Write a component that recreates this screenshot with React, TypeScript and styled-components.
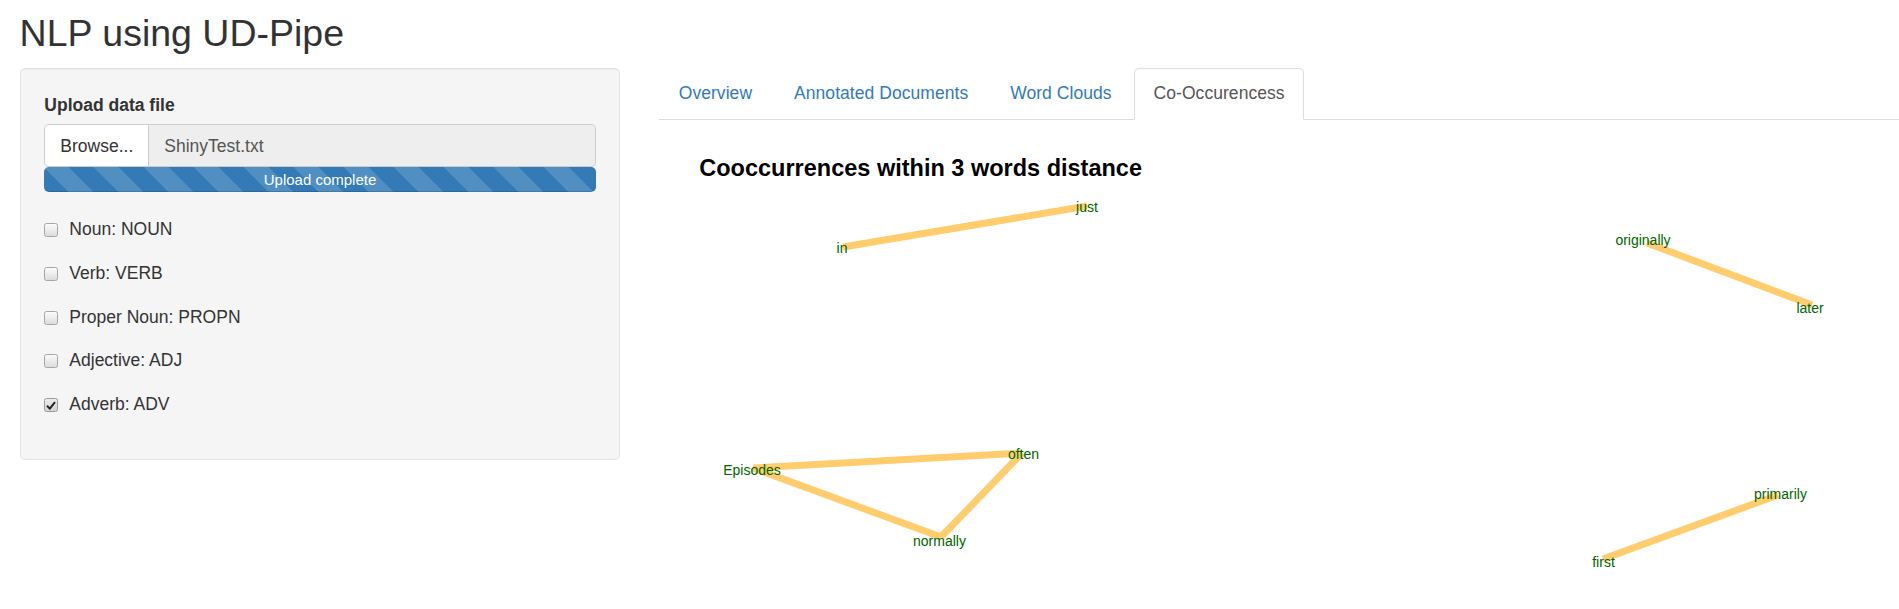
import React from "react";
import styled, { createGlobalStyle, css } from "styled-components";

const GlobalStyle = createGlobalStyle`
  html, body {
    margin: 0;
    padding: 0;
    background: #fff;
    overflow: hidden;
  }
  body {
    font-family: "Liberation Sans", Arial, sans-serif;
    font-size: 17.5px;
    line-height: 25px;
    color: #333;
  }
  * { box-sizing: border-box; }
`;

const Page = styled.div`
  padding-left: 19.6px;
  width: 1899px;
  height: 609px;
`;

const Title = styled.h2`
  margin: 0 0 13.35px 0;
  padding-top: 13.4px;
  font-size: 37.5px;
  font-weight: 500;
  line-height: 41.25px;
  color: #333;
`;

const Row = styled.div`
  display: flex;
  align-items: flex-start;
`;

const Well = styled.div`
  flex: none;
  width: 600.8px;
  background: #f5f5f5;
  border: 1.25px solid #e3e3e3;
  border-radius: 5px;
  box-shadow: inset 0 1px 1px rgba(0, 0, 0, 0.05);
  padding: 23.75px;
`;

const FieldLabel = styled.div`
  font-weight: 700;
  line-height: 25px;
  margin-bottom: 6.75px;
`;

const InputGroup = styled.div`
  display: flex;
  height: 42.5px;
`;

const BrowseButton = styled.div`
  flex: none;
  display: flex;
  align-items: center;
  padding: 1px 15px 0;
  background: #fff;
  border: 1.25px solid #ccc;
  border-radius: 5px 0 0 5px;
  color: #333;
`;

const FileName = styled.div`
  flex: 1;
  display: flex;
  align-items: center;
  padding: 1px 15px 0;
  background: #eee;
  border: 1.25px solid #ccc;
  border-left: none;
  border-radius: 0 5px 5px 0;
  color: #555;
`;

const Progress = styled.div`
  margin-top: 0.25px;
  height: 25px;
  border-radius: 5px;
  background-color: #337ab7;
  background-image: linear-gradient(
    45deg,
    rgba(255, 255, 255, 0.15) 25%,
    transparent 25%,
    transparent 50%,
    rgba(255, 255, 255, 0.15) 50%,
    rgba(255, 255, 255, 0.15) 75%,
    transparent 75%,
    transparent
  );
  background-size: 50px 50px;
  box-shadow: inset 0 -1px 0 rgba(0, 0, 0, 0.15);
  color: #fff;
  font-size: 15px;
  line-height: 25px;
  text-align: center;
`;

const CheckList = styled.div`
  margin-top: 25px;
  display: flex;
  flex-direction: column;
  gap: 18.75px;
  padding-bottom: 18.25px;
`;

const CheckRow = styled.label`
  display: flex;
  align-items: center;
  height: 25px;
  line-height: 25px;
`;

const Box = styled.span<{ $checked?: boolean }>`
  flex: none;
  width: 14px;
  height: 14px;
  margin-right: 11px;
  margin-top: 1px;
  border: 1px solid #a6a6a6;
  border-radius: 2.5px;
  background: linear-gradient(#fbfbfb, #dcdcdc);
  display: flex;
  align-items: center;
  justify-content: center;
  ${(p) =>
    p.$checked &&
    css`
      border-color: #9a9a9a;
      background: linear-gradient(#ececec, #d4d4d4);
    `}
`;

const Main = styled.div`
  flex: 1;
  margin-left: 38.6px;
  min-width: 0;
`;

const Tabs = styled.ul`
  display: flex;
  list-style: none;
  margin: 0;
  padding: 0;
  border-bottom: 1.25px solid #ddd;
`;

const Tab = styled.li<{ $active?: boolean }>`
  margin: 0 2.5px -1.25px 0;
  padding: 12.5px 18.75px;
  line-height: 25px;
  letter-spacing: 0.05px;
  border: 1.25px solid transparent;
  border-radius: 5px 5px 0 0;
  color: #337ab7;
  cursor: pointer;
  ${(p) =>
    p.$active &&
    css`
      color: #555;
      background: #fff;
      border-color: #ddd;
      border-bottom-color: transparent;
    `}
`;

const PlotTitle = styled.div`
  margin-top: 34.5px;
  padding-left: 40.3px;
  font-size: 23.5px;
  font-weight: 700;
  line-height: 28px;
  color: #000;
`;

const Plot = styled.svg`
  display: block;
`;

const EdgeLine = styled.line`
  stroke: #ffcc6e;
  stroke-width: 7;
  stroke-linecap: butt;
`;

const NodeLabel = styled.text`
  font-family: "Liberation Sans", Arial, sans-serif;
  font-size: 14px;
  fill: #006400;
`;

const checks = [
  { label: "Noun: NOUN", checked: false },
  { label: "Verb: VERB", checked: false },
  { label: "Proper Noun: PROPN", checked: false },
  { label: "Adjective: ADJ", checked: false },
  { label: "Adverb: ADV", checked: true },
];

const tabs = ["Overview", "Annotated Documents", "Word Clouds", "Co-Occurencess"];

const edges: [number, number, number, number][] = [
  [843, 247, 1087, 206],
  [753, 468, 1022, 453],
  [753, 468, 941, 537],
  [1022, 453, 941, 537],
  [1647, 243, 1812, 305],
  [1603, 559, 1778, 495],
];

const labels = [
  { t: "in", x: 842, y: 252.5 },
  { t: "just", x: 1087, y: 212 },
  { t: "Episodes", x: 752, y: 475 },
  { t: "often", x: 1023.5, y: 459 },
  { t: "normally", x: 939.5, y: 545.5 },
  { t: "originally", x: 1643, y: 245 },
  { t: "later", x: 1810, y: 313 },
  { t: "primarily", x: 1780.5, y: 499 },
  { t: "first", x: 1603.5, y: 566.5 },
];

export default function App() {
  return (
    <Page>
      <GlobalStyle />
      <Title>NLP using UD-Pipe</Title>
      <Row>
        <Well>
          <FieldLabel>Upload data file</FieldLabel>
          <InputGroup>
            <BrowseButton>Browse...</BrowseButton>
            <FileName>ShinyTest.txt</FileName>
          </InputGroup>
          <Progress>Upload complete</Progress>
          <CheckList>
            {checks.map((c) => (
              <CheckRow key={c.label}>
                <Box $checked={c.checked}>
                  {c.checked && (
                    <svg width="10" height="9" viewBox="0 0 10 9">
                      <path d="M1 4.8 L3.8 7.6 L9 1.2" fill="none" stroke="#222" strokeWidth="2" />
                    </svg>
                  )}
                </Box>
                {c.label}
              </CheckRow>
            ))}
          </CheckList>
        </Well>
        <Main>
          <Tabs>
            {tabs.map((t) => (
              <Tab key={t} $active={t === "Co-Occurencess"}>
                {t}
              </Tab>
            ))}
          </Tabs>
          <PlotTitle>Cooccurrences within 3 words distance</PlotTitle>
          <Plot width={1240} height={427} viewBox="659 182 1240 427">
            {edges.map(([x1, y1, x2, y2], i) => (
              <EdgeLine key={i} x1={x1} y1={y1} x2={x2} y2={y2} />
            ))}
            {labels.map((l) => (
              <NodeLabel key={l.t} x={l.x} y={l.y} textAnchor="middle">
                {l.t}
              </NodeLabel>
            ))}
          </Plot>
        </Main>
      </Row>
    </Page>
  );
}
